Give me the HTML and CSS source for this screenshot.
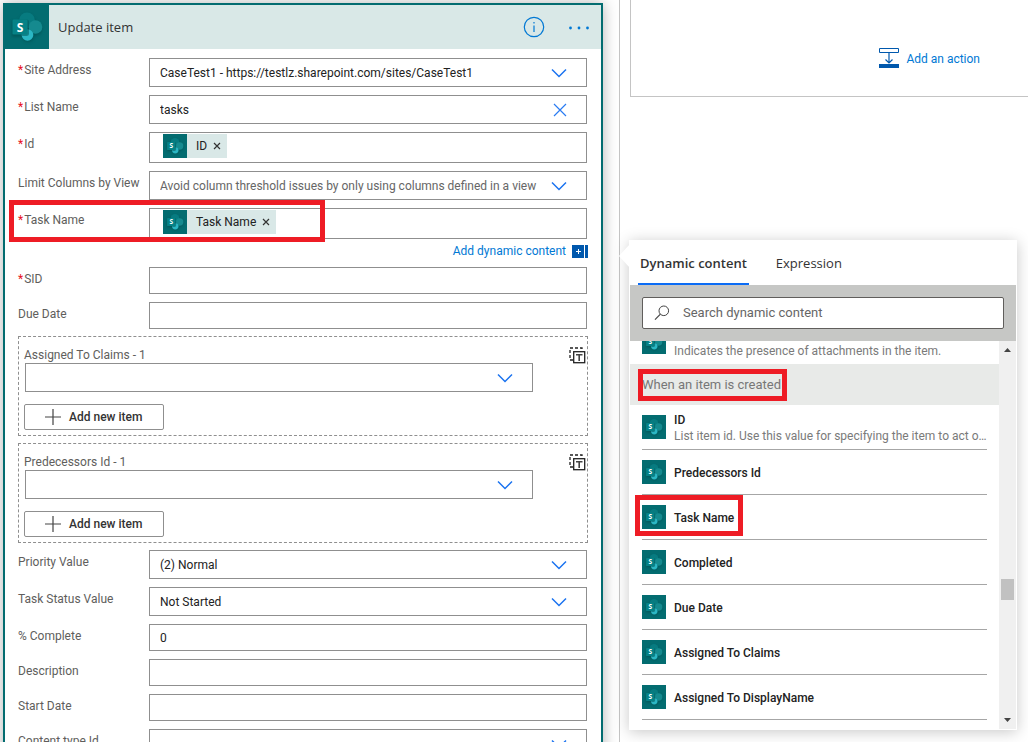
FILE: index.html
```html
<!DOCTYPE html>
<html lang="en">
<head>
<meta charset="utf-8">
<title>Update item</title>
<link rel="stylesheet" href="styles.css">
</head>
<body>
<svg class="defs" aria-hidden="true">
  <defs>
    <filter id="soft" x="-20%" y="-20%" width="140%" height="150%"><feGaussianBlur stdDeviation="1.6"/></filter>
    <symbol id="sharepoint" viewBox="0 0 44 44">
      <rect width="44" height="44" fill="#036c70"/>
      <g fill="#02494c" opacity=".55" filter="url(#soft)">
        <circle cx="22" cy="18" r="8.5"/><circle cx="30" cy="24" r="7"/><circle cx="23" cy="31" r="6"/><rect x="7" y="16" width="16" height="16"/>
      </g>
      <circle cx="22" cy="15.500" r="8" fill="#077b80"/>
      <circle cx="30.500" cy="22" r="6.800" fill="#158a8f"/>
      <circle cx="22.500" cy="30" r="5.800" fill="#2bb7c4"/>
      <path d="M14 14.500H21.500Q24 14.500 24 17V29Q24 31 21.500 31H17.200Q15.800 22 14 14.500Z" fill="#03575a" opacity=".55"/>
      <rect x="7.500" y="14.500" width="15" height="15" rx="1.200" fill="#058286"/>
      <text x="15" y="26.500" class="logo-letter">S</text>
    </symbol>
    <symbol id="chevron" viewBox="0 0 16 10"><path d="M1 1.500 8 8.500 15 1.500" fill="none" stroke="#1a73f0" stroke-width="1.500"/></symbol>
    <symbol id="plus" viewBox="0 0 16 16"><path d="M8 0V16M0 8H16" fill="none" stroke="#444" stroke-width="1.200"/></symbol>
    <symbol id="close" viewBox="0 0 8 8"><path d="M1 1 7 7M7 1 1 7" fill="none" stroke="#333" stroke-width="1.200"/></symbol>
    <symbol id="array" viewBox="0 0 17 17">
      <path d="M4 13H1V1H13V4" fill="none" stroke="#222" stroke-width="1.300" stroke-dasharray="3 2"/>
      <rect x="4.700" y="4.700" width="11" height="11" fill="#fff" stroke="#222" stroke-width="1.300"/>
      <path d="M7 7.700H13.500M10.200 7.700V14" stroke="#444" stroke-width="1.600"/>
    </symbol>
  </defs>
</svg>

<main class="designer">
  <section class="card">
    <header class="card-header">
      <svg class="card-logo"><use href="#sharepoint"/></svg>
      <h1 class="card-title">Update item</h1>
      <button class="icon-button" aria-label="Information">
        <svg width="22" height="22" viewBox="0 0 22 22"><circle cx="11" cy="11" r="9.700" fill="none" stroke="#0078d4" stroke-width="1.200"/><path d="M11 9.500V16M11 6V7.600" stroke="#0078d4" stroke-width="1.200"/></svg>
      </button>
      <button class="icon-button" aria-label="More">
        <svg width="22" height="22" viewBox="0 0 22 22" fill="#0078d4"><circle cx="2.500" cy="12" r="1.400"/><circle cx="11" cy="12" r="1.400"/><circle cx="19.500" cy="12" r="1.400"/></svg>
      </button>
    </header>

    <form class="card-body">
      <div class="row">
        <label class="label required" for="site">Site Address</label>
        <div class="picker">
          <select class="control" id="site"><option>CaseTest1 - https://testlz.sharepoint.com/sites/CaseTest1</option></select>
          <svg class="chevron"><use href="#chevron"/></svg>
        </div>
      </div>
      <div class="row">
        <label class="label required" for="list">List Name</label>
        <div class="picker">
          <input class="control" id="list" value="tasks">
          <button class="clear" type="button" aria-label="Clear"><svg width="14" height="14" viewBox="0 0 14 14"><path d="M1 1 13 13M13 1 1 13" stroke="#2a7bf2" stroke-width="1.200"/></svg></button>
        </div>
      </div>
      <div class="row">
        <label class="label required" for="id">Id</label>
        <div class="tokens">
          <span class="token"><svg class="logo"><use href="#sharepoint"/></svg>ID<button class="remove" type="button" aria-label="Remove ID"><svg width="8" height="8"><use href="#close"/></svg></button></span>
          <input class="token-input" id="id">
        </div>
      </div>
      <div class="row">
        <label class="label" for="view">Limit Columns by View</label>
        <div class="picker">
          <select class="control placeholder" id="view"><option>Avoid column threshold issues by only using columns defined in a view</option></select>
          <svg class="chevron"><use href="#chevron"/></svg>
        </div>
      </div>
      <div class="dynamic-field">
        <div class="row">
          <label class="label required" for="task">Task Name</label>
          <div class="tokens">
            <span class="token"><svg class="logo"><use href="#sharepoint"/></svg>Task Name<button class="remove" type="button" aria-label="Remove Task Name"><svg width="8" height="8"><use href="#close"/></svg></button></span>
            <input class="token-input" id="task">
          </div>
          <span class="mark mark-row"></span>
        </div>
        <a class="add-dynamic" href="#">Add dynamic content
          <svg width="16" height="13" viewBox="0 0 16 13"><path d="M0 0H12V13H0ZM13 0H16V13H13Z" fill="#0058ad"/><path d="M6.500 4V9M4 6.500H9" stroke="#fff"/></svg>
        </a>
      </div>
      <div class="row">
        <label class="label required" for="sid">SID</label>
        <input class="control plain" id="sid">
      </div>
      <div class="row">
        <label class="label" for="due">Due Date</label>
        <input class="control plain" id="due">
      </div>

      <div class="groups">
        <div class="group">
          <label class="group-label" for="claims">Assigned To Claims - 1</label>
          <button class="array-toggle" type="button" aria-label="Switch to input entire array"><svg width="17" height="17"><use href="#array"/></svg></button>
          <div class="picker">
            <select class="control" id="claims"><option></option></select>
            <svg class="chevron"><use href="#chevron"/></svg>
          </div>
          <button class="add-item" type="button"><svg width="16" height="16"><use href="#plus"/></svg>Add new item</button>
        </div>
        <div class="group">
          <label class="group-label" for="pred">Predecessors Id - 1</label>
          <button class="array-toggle" type="button" aria-label="Switch to input entire array"><svg width="17" height="17"><use href="#array"/></svg></button>
          <div class="picker">
            <select class="control" id="pred"><option></option></select>
            <svg class="chevron"><use href="#chevron"/></svg>
          </div>
          <button class="add-item" type="button"><svg width="16" height="16"><use href="#plus"/></svg>Add new item</button>
        </div>
      </div>

      <div class="row">
        <label class="label" for="priority">Priority Value</label>
        <div class="picker">
          <select class="control" id="priority"><option>(2) Normal</option></select>
          <svg class="chevron"><use href="#chevron"/></svg>
        </div>
      </div>
      <div class="row">
        <label class="label" for="status">Task Status Value</label>
        <div class="picker">
          <select class="control" id="status"><option>Not Started</option></select>
          <svg class="chevron"><use href="#chevron"/></svg>
        </div>
      </div>
      <div class="row">
        <label class="label" for="complete">% Complete</label>
        <input class="control plain" id="complete" value="0">
      </div>
      <div class="row">
        <label class="label" for="description">Description</label>
        <input class="control plain" id="description">
      </div>
      <div class="row">
        <label class="label" for="start">Start Date</label>
        <input class="control plain" id="start">
      </div>
      <div class="row">
        <label class="label" for="ctype">Content type Id</label>
        <div class="picker">
          <select class="control" id="ctype"><option></option></select>
          <svg class="chevron"><use href="#chevron"/></svg>
        </div>
      </div>
    </form>
  </section>

  <div class="side">
    <div class="branch">
      <a class="add-action" href="#">
        <svg width="20" height="20" viewBox="0 0 20 20"><path d="M.5 .5H19.500V4.500H.5Z" fill="#fff" stroke="#0058ad"/><path d="M0 16H20V20H0Z" fill="#0058ad"/><path d="M10 5V15M6.500 11.500 10 15 13.500 11.500" fill="none" stroke="#0058ad" stroke-width="1.200"/></svg>
        Add an action
      </a>
    </div>

    <aside class="panel">
      <svg class="pointer" width="11" height="24" viewBox="0 0 11 24"><path d="M11 0 0 12 11 24Z" fill="#fff"/></svg>
      <div class="tabs" role="tablist">
        <button class="tab active" role="tab" aria-selected="true">Dynamic content</button>
        <button class="tab" role="tab" aria-selected="false">Expression</button>
      </div>
      <div class="search-band">
        <label class="search">
          <svg width="16" height="16" viewBox="0 0 16 16"><circle cx="9.800" cy="5.800" r="4.800" fill="none" stroke="#444"/><path d="M6.400 9.200 1 14.700" stroke="#444" stroke-width="1.200"/></svg>
          <input class="search-input" aria-label="Search dynamic content" placeholder="Search dynamic content">
        </label>
      </div>
      <div class="results">
        <div class="list">
          <div class="item item-cut">
            <svg class="logo"><use href="#sharepoint"/></svg>
            <div class="item-text"><p class="item-desc">Indicates the presence of attachments in the item.</p></div>
          </div>
          <h2 class="section"><span class="section-name">When an item is created<span class="mark mark-section"></span></span></h2>
          <div class="item">
            <svg class="logo"><use href="#sharepoint"/></svg>
            <div class="item-text"><p class="item-name">ID</p><p class="item-desc">List item id. Use this value for specifying the item to act o...</p></div>
          </div>
          <div class="item"><svg class="logo"><use href="#sharepoint"/></svg><p class="item-name">Predecessors Id</p></div>
          <div class="item"><svg class="logo"><use href="#sharepoint"/></svg><p class="item-name">Task Name</p><span class="mark mark-item"></span></div>
          <div class="item"><svg class="logo"><use href="#sharepoint"/></svg><p class="item-name">Completed</p></div>
          <div class="item"><svg class="logo"><use href="#sharepoint"/></svg><p class="item-name">Due Date</p></div>
          <div class="item"><svg class="logo"><use href="#sharepoint"/></svg><p class="item-name">Assigned To Claims</p></div>
          <div class="item"><svg class="logo"><use href="#sharepoint"/></svg><p class="item-name">Assigned To DisplayName</p></div>
        </div>
        <div class="scrollbar">
          <svg width="7" height="4" viewBox="0 0 7 4"><path d="M0 4 3.500 0 7 4Z" fill="#444"/></svg>
          <span class="track-before"></span>
          <span class="thumb"></span>
          <span class="track-after"></span>
          <svg width="7" height="4" viewBox="0 0 7 4"><path d="M0 0 3.500 4 7 0Z" fill="#444"/></svg>
        </div>
      </div>
    </aside>
  </div>
</main>
</body>
</html>
```
FILE: styles.css
```css
* { box-sizing: border-box; }

body {
  margin: 0;
  background: #fff;
  color: #222;
  font: 12px/16px Roboto, "Open Sans", sans-serif;
}

button, input, select { font: inherit; color: inherit; }
button { margin: 0; padding: 0; border: 0; background: none; }
a { color: #0078d4; text-decoration: none; }
h1, h2, p { margin: 0; font-weight: 400; }
svg { display: block; flex: none; }

.defs { position: absolute; width: 0; height: 0; }
.logo { width: 24px; height: 24px; }
.logo-letter { fill: #fff; font: 700 12px "Open Sans", sans-serif; text-anchor: middle; }

.designer {
  display: grid;
  grid-template-columns: minmax(0, 600fr) minmax(0, 409fr);
  grid-template-rows: minmax(0, 1fr);
  column-gap: 16px;
  height: 100vh;
  padding: 3px 0 0 3px;
  overflow: hidden;
}

/* Action card */
.card {
  align-self: start;
  border: 2px solid #036c70;
  background: #fff;
  box-shadow: 0 0 14px rgba(0, 0, 0, .3);
}
.card-header {
  display: flex;
  align-items: center;
  gap: 23px;
  height: 44px;
  padding-right: 11px;
  background: #d9e8e7;
}
.card-logo { width: 44px; height: 44px; }
.card-title { flex: 1; margin-left: -14px; color: #333; font-family: "Open Sans", sans-serif; font-size: 13px; }
.card-body {
  display: flex;
  flex-direction: column;
  gap: 8px;
  padding: 9px 14px 12px 13px;
}

.row {
  position: relative;
  display: grid;
  grid-template-columns: 131px minmax(0, 1fr);
}
.label { padding-top: 4px; color: #605e5c; white-space: nowrap; }
.required::before { content: "*"; margin-right: 1px; color: #e81123; }

.picker { position: relative; }
.control {
  display: block;
  width: 100%;
  height: 29px;
  padding: 0 40px 0 10px;
  border: 1px solid #8f8f8f;
  border-radius: 0;
  background: #fff;
  appearance: none;
}
.control.plain { height: 27px; padding-right: 10px; }
.placeholder { color: #666; }
.chevron {
  position: absolute;
  top: 10px;
  right: 20px;
  width: 16px;
  height: 10px;
  pointer-events: none;
}
.clear { position: absolute; top: 8px; right: 20px; }

.tokens {
  display: flex;
  align-items: flex-start;
  height: 31px;
  padding: 1px 13px;
  border: 1px solid #8f8f8f;
}
.token {
  display: flex;
  align-items: center;
  height: 24px;
  padding-right: 6px;
  background: #d9e8e7;
  white-space: nowrap;
}
.token .logo { margin-right: 9px; }
.remove { margin-left: 6px; }
.token-input { flex: 1; min-width: 0; height: 24px; border: 0; background: none; }

.dynamic-field { display: flex; flex-direction: column; gap: 4px; }
.add-dynamic { display: flex; align-items: center; justify-content: flex-end; gap: 6px; margin-right: -1px; }

.groups { display: flex; flex-direction: column; gap: 7px; margin: -1px 0; }
.group {
  display: grid;
  grid-template-columns: minmax(0, 1fr) auto;
  margin-right: -1px;
  padding: 10px 1px 5px 5px;
  border: 1px dashed #8f8f8f;
}
.group-label { height: 16px; color: #605e5c; }
.group .picker { grid-column: 1; margin: 0 36px 0 1px; }
.array-toggle { height: 16px; }
.add-item {
  grid-column: 1;
  justify-self: start;
  display: flex;
  align-items: center;
  gap: 8px;
  height: 26px;
  margin-top: 12px;
  padding: 0 21px 0 20px;
  border: 1px solid #8f8f8f;
  border-radius: 2px;
  background: #fff;
  color: #333;
  font-weight: 500;
}

/* Annotation frames */
.mark { position: absolute; border: 5px solid #ee1c25; pointer-events: none; }
.mark-row { top: -8px; bottom: -3px; left: -9px; width: 316px; }
.mark-section { top: -8px; bottom: -8px; left: -4px; right: -6px; }
.mark-item { top: 0; bottom: 3px; left: -7px; width: 108px; }

/* Right side */
.side {
  display: flex;
  flex-direction: column;
  margin-top: -3px;
  border-left: 1px solid #c4c4c4;
}
.branch {
  display: flex;
  justify-content: flex-end;
  height: 97px;
  margin-left: 10px;
  padding: 48px 48px 0 0;
  border-left: 1px solid #c4c4c4;
  border-bottom: 1px solid #c4c4c4;
}
.add-action { display: flex; gap: 7px; height: 20px; line-height: 22px; }

.panel {
  position: relative;
  display: flex;
  flex: 1;
  flex-direction: column;
  min-height: 0;
  margin: 143px 11px 12px 9px;
  padding: 0 1px 1px;
  background: #fff;
  box-shadow: 0 2px 14px rgba(0, 0, 0, .22);
}
.pointer { position: absolute; top: 4px; left: -10px; }
.tabs { display: flex; gap: 25px; height: 45px; padding-left: 8px; }
.tab {
  padding: 2px 2px 0;
  border-bottom: 2px solid transparent;
  color: #333;
  font-family: "Open Sans", sans-serif;
  font-size: 13px;
}
.tab.active { border-color: #0b6cf5; font-weight: 600; }
.search-band { padding: 12px; background: #c6c7c5; }
.search {
  display: flex;
  align-items: center;
  gap: 13px;
  height: 32px;
  padding-left: 11px;
  border: 1px solid #605e5c;
  border-radius: 2px;
  background: #fff;
}
.search-input {
  flex: 1;
  min-width: 0;
  padding: 0;
  border: 0;
  outline: 0;
  font-size: 13px;
}
.search-input::placeholder { color: #666; opacity: 1; }

.results { display: flex; flex: 1; min-height: 0; }
.list { flex: 1; min-width: 0; overflow: hidden; }
.item {
  position: relative;
  display: flex;
  align-items: center;
  gap: 8px;
  height: 45px;
  margin: 0 12px;
  border-bottom: 1px solid #a6a6a6;
}
.item-cut { height: 44px; margin-top: -21px; border-bottom: 0; }
.item-cut .item-text { align-self: flex-end; padding-bottom: 5px; }
.item-text { min-width: 0; }
.item-name { padding-top: 2px; color: #222; font-weight: 500; }
.item-desc { overflow: hidden; color: #7a7a7a; text-overflow: ellipsis; white-space: nowrap; }
.section {
  display: flex;
  align-items: center;
  height: 41px;
  padding-left: 12px;
  background: #e8eae8;
  color: #777;
  font-size: 13px;
}
.section-name { position: relative; }

.scrollbar {
  display: flex;
  flex-direction: column;
  align-items: center;
  width: 17px;
  padding: 7px 0;
  background: #f0f0f0;
}
.track-before { flex: 228; }
.thumb { width: 13px; height: 21px; background: #c1c1c1; }
.track-after { flex: 118; }
```
